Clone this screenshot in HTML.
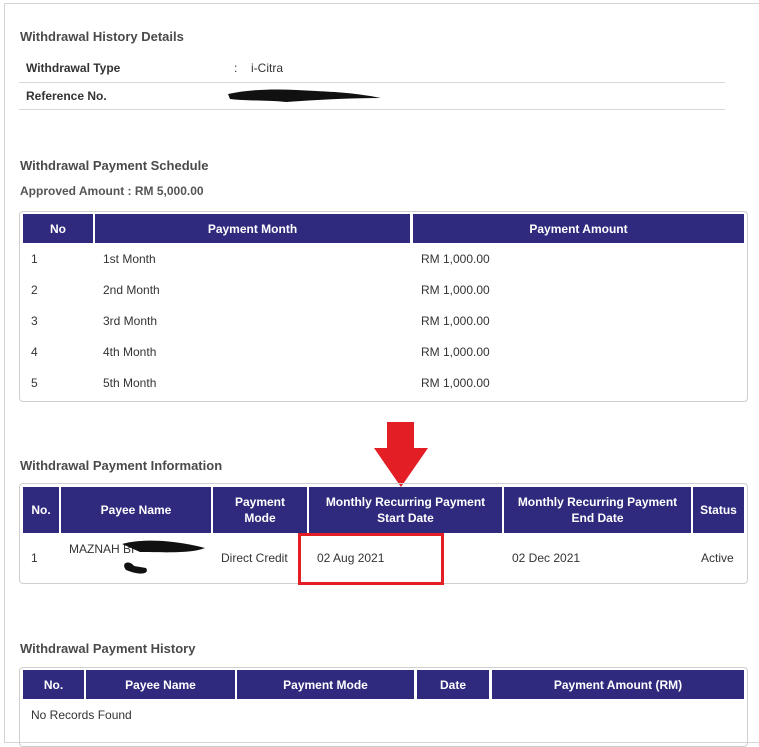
<!DOCTYPE html>
<html><head><meta charset="utf-8"><style>
body{margin:0;width:759px;height:734px;overflow:hidden;background:#fff;font-family:"Liberation Sans",Arial,sans-serif;position:relative}
.a{position:absolute}
.frame{left:4px;top:3px;width:760px;height:740px;border:1px solid #d4d4d4;box-sizing:border-box}
h3{position:absolute;margin:0;font-size:13px;font-weight:bold;color:#4a4a4a;white-space:nowrap}
.lbl{font-size:12px;font-weight:bold;color:#333}
.line{height:1px;background:#d8d8d8}
.box{border:1px solid #cfcfcf;border-radius:4px;box-sizing:border-box}
.hd{background:#2f2a7e;color:#fff;font-weight:bold;font-size:12px;display:flex;align-items:center;justify-content:center;text-align:center;line-height:16px}
.t{font-size:12px;color:#333;white-space:nowrap}
</style></head><body>
<div class="a frame"></div>
<h3 style="left:20px;top:29px">Withdrawal History Details</h3>
<div class="a lbl" style="left:26px;top:61px">Withdrawal Type</div>
<div class="a t" style="left:234px;top:61px">:</div>
<div class="a t" style="left:251px;top:61px">i-Citra</div>
<div class="a line" style="left:19px;top:82px;width:706px"></div>
<div class="a lbl" style="left:26px;top:89px">Reference No.</div>
<svg class="a" style="left:226px;top:86px" width="160" height="20"><path d="M2 8 C30 2,60 3,90 5 C110 6,130 7,155 12 C120 12,90 14,60 16 C40 14,20 15,4 13Z" fill="#111"/></svg>
<div class="a line" style="left:19px;top:109px;width:706px"></div>

<h3 style="left:20px;top:158px">Withdrawal Payment Schedule</h3>
<div class="a lbl" style="left:20px;top:184px;color:#555">Approved Amount : RM 5,000.00</div>
<div class="a box" style="left:19px;top:211px;width:729px;height:191px"></div>
<div class="a hd" style="left:23px;top:214px;width:70px;height:29px">No</div>
<div class="a hd" style="left:95px;top:214px;width:315px;height:29px">Payment Month</div>
<div class="a hd" style="left:413px;top:214px;width:331px;height:29px">Payment Amount</div>
<div class="a t" style="left:31px;top:252px">1</div><div class="a t" style="left:103px;top:252px">1st Month</div><div class="a t" style="left:421px;top:252px">RM 1,000.00</div>
<div class="a t" style="left:31px;top:283px">2</div><div class="a t" style="left:103px;top:283px">2nd Month</div><div class="a t" style="left:421px;top:283px">RM 1,000.00</div>
<div class="a t" style="left:31px;top:314px">3</div><div class="a t" style="left:103px;top:314px">3rd Month</div><div class="a t" style="left:421px;top:314px">RM 1,000.00</div>
<div class="a t" style="left:31px;top:345px">4</div><div class="a t" style="left:103px;top:345px">4th Month</div><div class="a t" style="left:421px;top:345px">RM 1,000.00</div>
<div class="a t" style="left:31px;top:376px">5</div><div class="a t" style="left:103px;top:376px">5th Month</div><div class="a t" style="left:421px;top:376px">RM 1,000.00</div>

<svg class="a" style="left:372px;top:421px" width="58" height="68"><path d="M15 1H42V27H56L29 66L2 27H15Z" fill="#e41e25"/></svg>
<h3 style="left:20px;top:458px">Withdrawal Payment Information</h3>
<div class="a box" style="left:19px;top:483px;width:729px;height:101px"></div>
<div class="a hd" style="left:23px;top:487px;width:36px;height:46px">No.</div>
<div class="a hd" style="left:61px;top:487px;width:150px;height:46px">Payee Name</div>
<div class="a hd" style="left:213px;top:487px;width:94px;height:46px">Payment<br>Mode</div>
<div class="a hd" style="left:309px;top:487px;width:193px;height:46px">Monthly Recurring Payment<br>Start Date</div>
<div class="a hd" style="left:504px;top:487px;width:187px;height:46px">Monthly Recurring Payment<br>End Date</div>
<div class="a hd" style="left:693px;top:487px;width:51px;height:46px">Status</div>
<div class="a t" style="left:31px;top:551px">1</div>
<div class="a t" style="left:69px;top:542px">MAZNAH BI</div>
<svg class="a" style="left:120px;top:538px" width="90" height="42"><path d="M2 6C20 1,50 1,85 10C70 16,40 14,20 14Z" fill="#111"/><path d="M14 28C10 22,0 24,6 32C20 38,30 36,26 30Z" fill="#111"/></svg>
<div class="a t" style="left:221px;top:551px">Direct Credit</div>
<div class="a t" style="left:317px;top:551px">02 Aug 2021</div>
<div class="a t" style="left:512px;top:551px">02 Dec 2021</div>
<div class="a t" style="left:701px;top:551px">Active</div>
<div class="a" style="left:298px;top:533px;width:146px;height:52px;border:3px solid #e41e25;box-sizing:border-box"></div>

<h3 style="left:20px;top:641px">Withdrawal Payment History</h3>
<div class="a box" style="left:19px;top:667px;width:729px;height:80px"></div>
<div class="a hd" style="left:23px;top:670px;width:61px;height:29px">No.</div>
<div class="a hd" style="left:86px;top:670px;width:149px;height:29px">Payee Name</div>
<div class="a hd" style="left:237px;top:670px;width:177px;height:29px">Payment Mode</div>
<div class="a hd" style="left:417px;top:670px;width:72px;height:29px">Date</div>
<div class="a hd" style="left:492px;top:670px;width:252px;height:29px">Payment Amount (RM)</div>
<div class="a t" style="left:31px;top:708px">No Records Found</div>
</body></html>
